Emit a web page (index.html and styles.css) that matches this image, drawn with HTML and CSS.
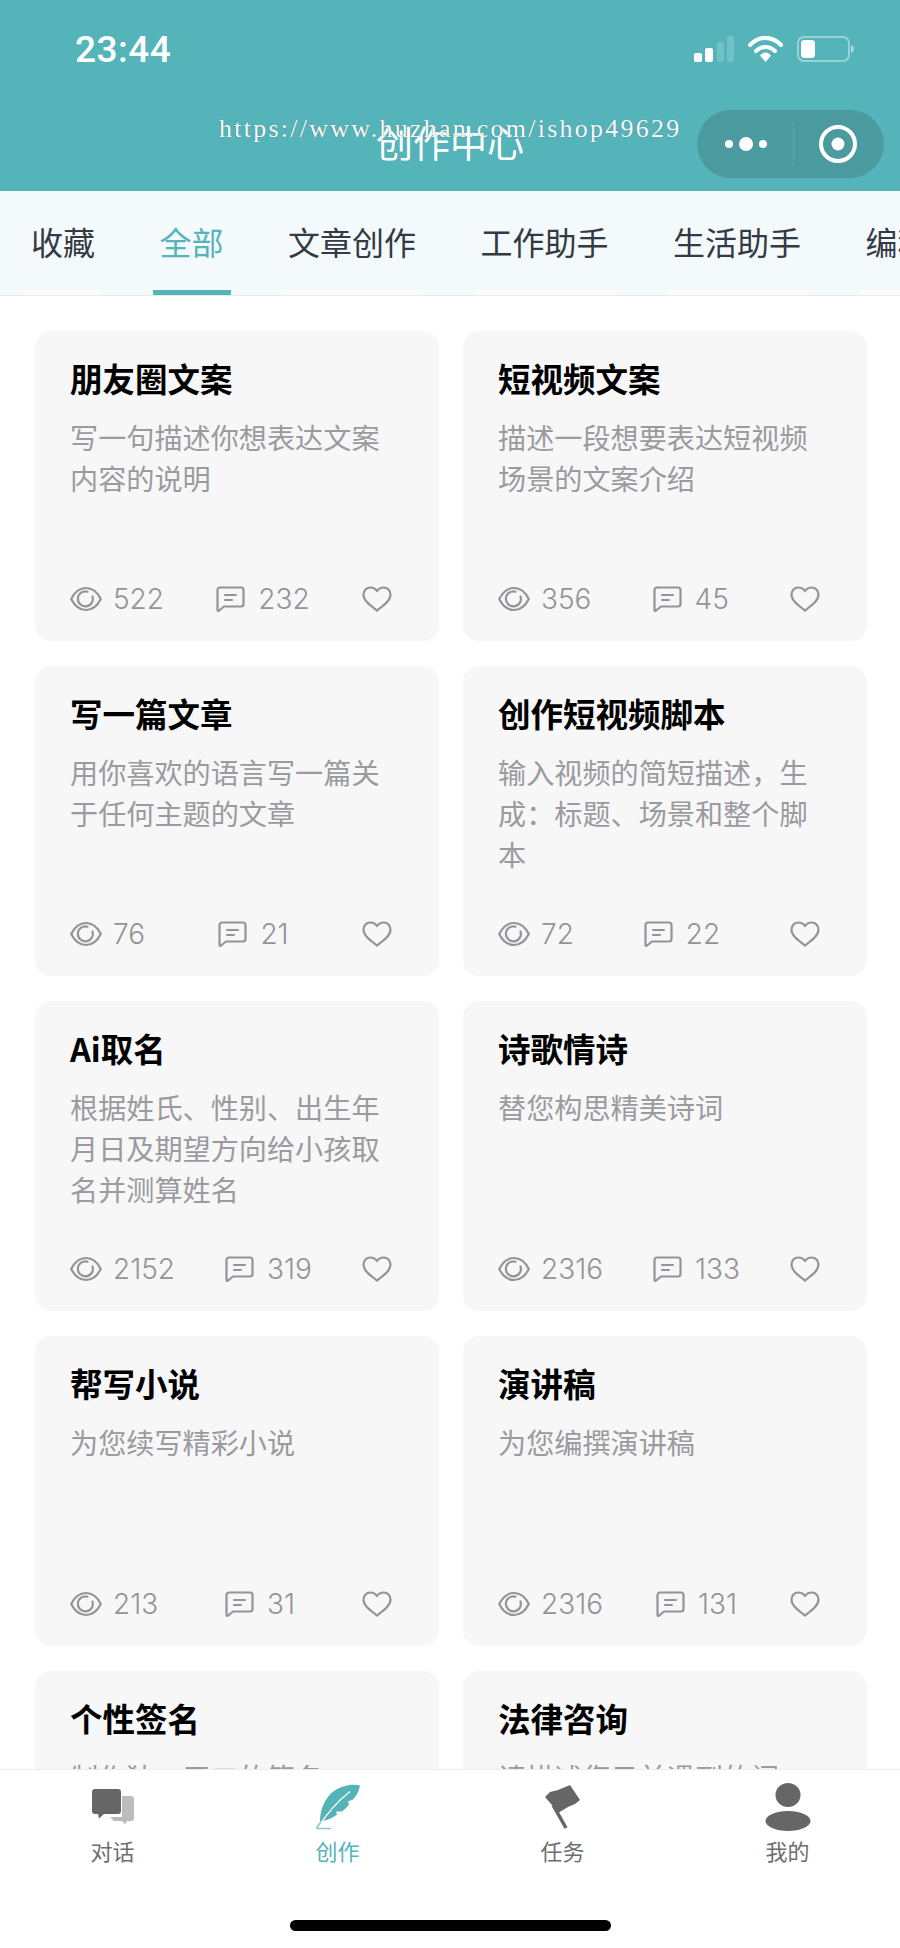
FILE: index.html
```html
<!DOCTYPE html>
<html lang="zh-CN">
<head>
    <meta charset="UTF-8">
    <meta name="viewport" content="width=device-width, initial-scale=1.0">
    <title>创作中心</title>
    <link rel="stylesheet" href="styles.css">
</head>
<body>
    <svg class="sprites" width="0" height="0">
        <symbol id="i-eye" viewBox="0 0 32 26">
            <path d="M1.200 13C5 5.500 10 2 16 2S27 5.500 30.800 13C27 20.500 22 24 16 24S5 20.500 1.200 13Z" fill="none" stroke="currentColor" stroke-width="2.200" stroke-linejoin="round"/>
            <path d="M22.500 10.500A7.500 7.500 0 1 1 17.500 5.700" fill="none" stroke="currentColor" stroke-width="2.200" stroke-linecap="round"/>
        </symbol>
        <symbol id="i-comment" viewBox="0 0 29 26">
            <path d="M4 1.500H25A2.500 2.500 0 0 1 27.500 4V18A2.500 2.500 0 0 1 25 20.500H8L2.500 25C2 25 1.500 24.600 1.500 24V4A2.500 2.500 0 0 1 4 1.500Z" fill="none" stroke="currentColor" stroke-width="2.200" stroke-linejoin="round"/>
            <path d="M9 9H20M9 14H16" fill="none" stroke="currentColor" stroke-width="2" stroke-linecap="round"/>
        </symbol>
        <symbol id="i-heart" viewBox="0 0 30 26">
            <path d="M15 24.500C9 20 1.500 15 1.500 8.500C1.500 4.500 4.500 1.500 8.300 1.500C11 1.500 13.500 2.800 15 5C16.500 2.800 19 1.500 21.700 1.500C25.500 1.500 28.500 4.500 28.500 8.500C28.500 15 21 20 15 24.500Z" fill="none" stroke="currentColor" stroke-width="2.200" stroke-linejoin="round"/>
        </symbol>
    </svg>

    <div class="app">
        <header class="top">
            <div class="status-bar">
                <span class="time">23:44</span>
                <div class="status-icons">
                    <svg width="40" height="26" viewBox="0 0 40 26">
                        <rect x="0" y="17" width="8" height="9" rx="2" fill="#fff"/>
                        <rect x="11" y="12" width="8" height="14" rx="2" fill="#fff"/>
                        <rect x="23" y="6" width="7" height="20" rx="2" fill="#fff" opacity=".18"/>
                        <rect x="33" y="0" width="7" height="26" rx="2" fill="#fff" opacity=".18"/>
                    </svg>
                    <svg width="35" height="26" viewBox="0 0 35 26">
                        <path d="M2 9C11-.5 24-.5 33 9" fill="none" stroke="#fff" stroke-width="4" stroke-linecap="round"/>
                        <path d="M8 15C13.500 9.500 21.500 9.500 27 15" fill="none" stroke="#fff" stroke-width="4" stroke-linecap="round"/>
                        <path d="M12 19.500C15.500 15.500 19.500 15.500 23 19.500L17.500 26Z" fill="#fff"/>
                    </svg>
                    <svg width="57" height="26" viewBox="0 0 57 26">
                        <rect x="1" y="1" width="51" height="24" rx="6" fill="none" stroke="#fff" stroke-opacity=".4" stroke-width="2"/>
                        <rect x="4" y="4" width="14" height="18" rx="3.500" fill="#fff"/>
                        <path d="M54 9C56 10 57 11.500 57 13S56 16 54 17Z" fill="#fff" fill-opacity=".5"/>
                    </svg>
                </div>
            </div>
            <div class="nav-bar">
                <h1 class="page-title">创作中心</h1>
                <div class="capsule">
                    <svg width="42" height="14" viewBox="0 0 42 14">
                        <circle cx="4" cy="7" r="4" fill="#fff"/>
                        <circle cx="21" cy="7" r="7" fill="#fff"/>
                        <circle cx="38" cy="7" r="4" fill="#fff"/>
                    </svg>
                    <span class="capsule-line"></span>
                    <svg width="38" height="38" viewBox="0 0 38 38">
                        <circle cx="19" cy="19" r="17" fill="none" stroke="#fff" stroke-width="4"/>
                        <circle cx="19" cy="19" r="6.500" fill="#fff"/>
                    </svg>
                </div>
            </div>
            <span class="watermark">https://www.huzhan.com/ishop49629</span>
        </header>

        <nav class="tabs">
            <span class="tab">收藏</span>
            <span class="tab tab-active">全部</span>
            <span class="tab">文章创作</span>
            <span class="tab">工作助手</span>
            <span class="tab">生活助手</span>
            <span class="tab">编程助手</span>
        </nav>

        <main class="card-list">
            <article class="card">
                <h2 class="card-title">朋友圈文案</h2>
                <p class="card-desc">写一句描述你想表达文案内容的说明</p>
                <div class="card-stats">
                    <span class="stat"><svg class="eye"><use href="#i-eye"/></svg>522</span>
                    <span class="stat"><svg class="comment"><use href="#i-comment"/></svg>232</span>
                    <svg class="heart"><use href="#i-heart"/></svg>
                </div>
            </article>
            <article class="card">
                <h2 class="card-title">短视频文案</h2>
                <p class="card-desc">描述一段想要表达短视频场景的文案介绍</p>
                <div class="card-stats">
                    <span class="stat"><svg class="eye"><use href="#i-eye"/></svg>356</span>
                    <span class="stat"><svg class="comment"><use href="#i-comment"/></svg>45</span>
                    <svg class="heart"><use href="#i-heart"/></svg>
                </div>
            </article>
            <article class="card">
                <h2 class="card-title">写一篇文章</h2>
                <p class="card-desc">用你喜欢的语言写一篇关于任何主题的文章</p>
                <div class="card-stats">
                    <span class="stat"><svg class="eye"><use href="#i-eye"/></svg>76</span>
                    <span class="stat"><svg class="comment"><use href="#i-comment"/></svg>21</span>
                    <svg class="heart"><use href="#i-heart"/></svg>
                </div>
            </article>
            <article class="card">
                <h2 class="card-title">创作短视频脚本</h2>
                <p class="card-desc">输入视频的简短描述，生成：标题、场景和整个脚本</p>
                <div class="card-stats">
                    <span class="stat"><svg class="eye"><use href="#i-eye"/></svg>72</span>
                    <span class="stat"><svg class="comment"><use href="#i-comment"/></svg>22</span>
                    <svg class="heart"><use href="#i-heart"/></svg>
                </div>
            </article>
            <article class="card">
                <h2 class="card-title">Ai取名</h2>
                <p class="card-desc">根据姓氏、性别、出生年月日及期望方向给小孩取名并测算姓名</p>
                <div class="card-stats">
                    <span class="stat"><svg class="eye"><use href="#i-eye"/></svg>2152</span>
                    <span class="stat"><svg class="comment"><use href="#i-comment"/></svg>319</span>
                    <svg class="heart"><use href="#i-heart"/></svg>
                </div>
            </article>
            <article class="card">
                <h2 class="card-title">诗歌情诗</h2>
                <p class="card-desc">替您构思精美诗词</p>
                <div class="card-stats">
                    <span class="stat"><svg class="eye"><use href="#i-eye"/></svg>2316</span>
                    <span class="stat"><svg class="comment"><use href="#i-comment"/></svg>133</span>
                    <svg class="heart"><use href="#i-heart"/></svg>
                </div>
            </article>
            <article class="card">
                <h2 class="card-title">帮写小说</h2>
                <p class="card-desc">为您续写精彩小说</p>
                <div class="card-stats">
                    <span class="stat"><svg class="eye"><use href="#i-eye"/></svg>213</span>
                    <span class="stat"><svg class="comment"><use href="#i-comment"/></svg>31</span>
                    <svg class="heart"><use href="#i-heart"/></svg>
                </div>
            </article>
            <article class="card">
                <h2 class="card-title">演讲稿</h2>
                <p class="card-desc">为您编撰演讲稿</p>
                <div class="card-stats">
                    <span class="stat"><svg class="eye"><use href="#i-eye"/></svg>2316</span>
                    <span class="stat"><svg class="comment"><use href="#i-comment"/></svg>131</span>
                    <svg class="heart"><use href="#i-heart"/></svg>
                </div>
            </article>
            <article class="card">
                <h2 class="card-title">个性签名</h2>
                <p class="card-desc">制作独一无二的签名</p>
            </article>
            <article class="card">
                <h2 class="card-title">法律咨询</h2>
                <p class="card-desc">请描述您目前遇到的问</p>
            </article>
        </main>

        <footer class="tab-bar">
            <div class="tab-items">
                <div class="tab-item">
                    <svg class="tab-icon" width="42" height="36" viewBox="0 0 42 36">
                        <path d="M30 7H39A3 3 0 0 1 42 10V29A3 3 0 0 1 39 32H35L33 35.500L30 32H22L18 28H30Z" fill="#bcbcbc"/>
                        <path d="M3 0H26A3 3 0 0 1 29 3V22A3 3 0 0 1 26 25H12L7 29.500L6 25H3A3 3 0 0 1 0 22V3A3 3 0 0 1 3 0Z" fill="#666"/>
                    </svg>
                    <span class="tab-label">对话</span>
                </div>
                <div class="tab-item tab-item-active">
                    <svg class="tab-icon" width="44" height="45" viewBox="0 0 44 45">
                        <path d="M44 1C36-1 24 1 15 9C8 16 4 26 4 37C10 36 16 34 21 30L20 27L26 27C30 24 33 20 33 20L32 17L37 15C41 11 43 6 44 1Z" fill="#54b4ba"/>
                        <path d="M2 43C9 32 20 18 34 7" fill="none" stroke="#fff" stroke-width="1.300"/>
                        <path d="M0.500 44C1.500 42 3 40 5 37M0.500 44H15" fill="none" stroke="#84cacf" stroke-width="1.500"/>
                    </svg>
                    <span class="tab-label">创作</span>
                </div>
                <div class="tab-item">
                    <svg class="tab-icon" width="36" height="44" viewBox="0 0 36 44">
                        <path d="M0 12L5 7L13 5L25 0L35 15L30 19L23 22L13 28L10 22L7 20Z" fill="#666"/>
                        <path d="M8 20L21 43" fill="none" stroke="#666" stroke-width="3.500"/>
                    </svg>
                    <span class="tab-label">任务</span>
                </div>
                <div class="tab-item">
                    <svg class="tab-icon" width="46" height="48" viewBox="0 0 46 48">
                        <ellipse cx="23" cy="12" rx="12.500" ry="12" fill="#666"/>
                        <ellipse cx="23" cy="38" rx="22.500" ry="10" fill="#666"/>
                    </svg>
                    <span class="tab-label">我的</span>
                </div>
            </div>
            <div class="home-bar"></div>
        </footer>
    </div>
</body>
</html>
```

FILE: styles.css
```css
:root {
    --teal: #54b4ba;
    --capsule: #4b9aa0;
    --stat: #939398;
}

* {
    box-sizing: border-box;
}

body {
    margin: 0;
    background-color: white;
    font-family: "Noto Sans CJK SC", "Noto Sans", sans-serif;
}

.sprites {
    display: block;
    height: 0;
}

.app {
    height: 1948px;
    display: flex;
    flex-direction: column;
    overflow: hidden;
}

/* header */
.top {
    position: relative;
    flex: none;
    height: 191px;
    background-color: var(--teal);
    color: white;
}

.status-bar {
    height: 96px;
    padding: 2px 46px 0 75px;
    display: flex;
    justify-content: space-between;
    align-items: center;
}

.time {
    font-family: Roboto, "Liberation Sans", sans-serif;
    font-size: 37px;
    font-weight: 500;
    letter-spacing: 0.5px;
}

.status-icons {
    display: flex;
    align-items: center;
    gap: 14px;
}

.nav-bar {
    height: 95px;
    padding: 0 16px;
    display: grid;
    grid-template-columns: 1fr auto 1fr;
    align-items: center;
}

.page-title {
    grid-column: 2;
    margin: 0 0 4px;
    font-size: 37px;
    font-weight: 400;
    line-height: 48px;
}

.capsule {
    grid-column: 3;
    justify-self: end;
    width: 187px;
    height: 68px;
    padding: 0 27px 0 28px;
    display: flex;
    align-items: center;
    justify-content: space-between;
    border-radius: 34px;
    background-color: var(--capsule);
}

.capsule-line {
    width: 1px;
    height: 44px;
    background-color: rgba(255,255,255,0.12);
}

.watermark {
    position: absolute;
    left: 219px;
    top: 113px;
    font-family: "Liberation Serif", serif;
    font-size: 26px;
    line-height: 32px;
    letter-spacing: 2.25px;
    white-space: nowrap;
    color: #f4fbfb;
    text-shadow: 0 0 1px #5a6a6c;
}

/* tabs */
.tabs {
    flex: none;
    height: 105px;
    padding-left: 24px;
    display: flex;
    gap: 50.5px;
    overflow: hidden;
    background-color: #f4fafb;
    border-bottom: 1px solid #e9eaeb;
}

.tab {
    flex: none;
    padding: 0 7px;
    height: 104px;
    line-height: 100px;
    font-size: 32px;
    color: #333a44;
    border-bottom: 5px solid #fbfdfd;
}

.tab-active {
    color: var(--teal);
    border-bottom-color: var(--teal);
}

/* cards */
.card-list {
    flex: 1;
    min-height: 0;
    padding: 35px 33px 0 35px;
    display: grid;
    grid-template-columns: 404px 404px;
    grid-auto-rows: 310px;
    column-gap: 24px;
    row-gap: 25px;
    overflow: hidden;
}

.card {
    padding: 25px 35px 27px;
    display: flex;
    flex-direction: column;
    border-radius: 16px;
    background-color: #f7f7f8;
}

.card-title {
    margin: 0;
    font-size: 32.5px;
    font-weight: 700;
    line-height: 44px;
    color: black;
}

.card-desc {
    margin: 16px 0 0;
    font-size: 28.15px;
    line-height: 41px;
    color: #9a9a9f;
}

.card-stats {
    margin-top: auto;
    padding-right: 12px;
    height: 30px;
    display: flex;
    justify-content: space-between;
    align-items: center;
    font-family: "Inter", "Liberation Sans", sans-serif;
    font-size: 28px;
    font-weight: 300;
    color: var(--stat);
}

.stat {
    display: flex;
    align-items: center;
    gap: 11px;
}

.eye {
    width: 32px;
    height: 26px;
}

.comment {
    width: 29px;
    height: 26px;
    margin-right: 2px;
}

.heart {
    width: 30px;
    height: 26px;
}

/* bottom bar */
.tab-bar {
    position: relative;
    flex: none;
    height: 179px;
    display: flex;
    flex-direction: column;
    background-color: white;
    border-top: 1px solid #ececec;
}

.tab-items {
    display: grid;
    grid-template-columns: repeat(4, 225px);
}

.tab-item {
    padding-top: 13px;
    display: flex;
    flex-direction: column;
    align-items: center;
    font-size: 22px;
    color: #6e6e6e;
}

.tab-icon {
    height: 48px;
}

.tab-label {
    margin-top: 4px;
    line-height: 30px;
}

.tab-item-active {
    color: var(--teal);
}

.home-bar {
    align-self: center;
    width: 321px;
    height: 11px;
    margin-top: auto;
    margin-bottom: 17px;
    border-radius: 6px;
    background-color: black;
}
```
